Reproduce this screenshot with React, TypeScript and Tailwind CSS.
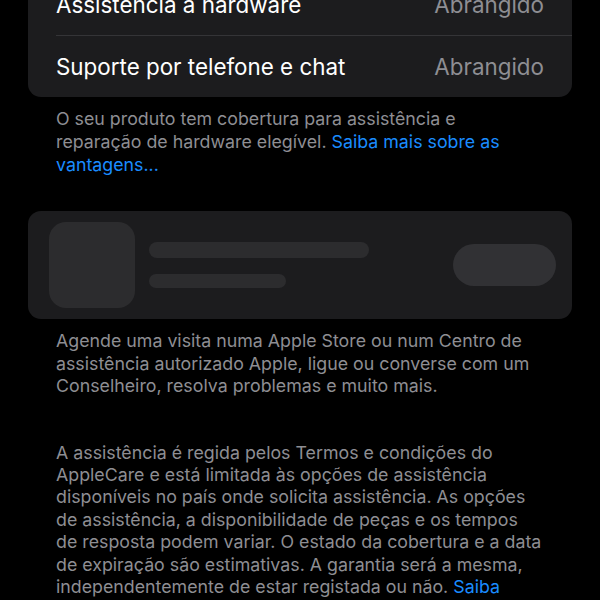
import React from "react";

const rows = [
  { label: "Assistência à hardware", value: "Abrangido" },
  { label: "Suporte por telefone e chat", value: "Abrangido" },
];

export default function App() {
  return (
    <div className="min-h-[600px] h-[600px] overflow-hidden bg-black px-7 font-['Inter',sans-serif] antialiased">
      {/* Coverage list */}
      <div className="-mt-[25px] rounded-[13px] bg-[#1c1c1e]">
        {rows.map((row, i) => (
          <div key={row.label} className="pl-7">
            <div
              className={
                "flex h-[61px] items-center justify-between pr-7 " +
                (i < rows.length - 1 ? "border-b border-[#343437]" : "")
              }
            >
              <span className="text-[22.4px] text-white">{row.label}</span>
              <span className="text-[22.4px] text-[#8e8e93]">{row.value}</span>
            </div>
          </div>
        ))}
      </div>

      <p className="mt-[10px] whitespace-nowrap pl-7 text-[17.8px] leading-[23px] text-[#8e8e93]">
        O seu produto tem cobertura para assistência e<br />
        reparação de hardware elegível.{" "}
        <span className="text-[#1a8cff]">
          Saiba mais sobre as<br />
          vantagens...
        </span>
      </p>

      {/* Loading placeholder */}
      <div className="mt-[35px] flex h-[108px] items-center rounded-[13px] bg-[#1c1c1e] pl-[21px] pr-[16px]">
        <div className="h-[86px] w-[86px] shrink-0 rounded-[17px] bg-[#2c2c2e]" />
        <div className="ml-[14px] flex flex-1 flex-col gap-[16px]">
          <div className="h-[16px] w-[220px] rounded-full bg-[#2c2c2e]" />
          <div className="h-[14px] w-[137px] rounded-full bg-[#2c2c2e]" />
        </div>
        <div className="h-[42px] w-[103px] shrink-0 rounded-full bg-[#313134]" />
      </div>

      <p className="mt-[11px] whitespace-nowrap pl-7 text-[17.8px] leading-[22.5px] text-[#8e8e93]">
        Agende uma visita numa Apple Store ou num Centro de<br />
        assistência autorizado Apple, ligue ou converse com um<br />
        Conselheiro, resolva problemas e muito mais.
      </p>

      <p className="mt-[44px] whitespace-nowrap pl-7 text-[17.8px] leading-[22.4px] text-[#8e8e93]">
        A assistência é regida pelos Termos e condições do<br />
        AppleCare e está limitada às opções de assistência<br />
        disponíveis no país onde solicita assistência. As opções<br />
        de assistência, a disponibilidade de peças e os tempos<br />
        de resposta podem variar. O estado da cobertura e a data<br />
        de expiração são estimativas. A garantia será a mesma,<br />
        independentemente de estar registada ou não.{" "}
        <span className="text-[#1a8cff]">Saiba</span>
      </p>
    </div>
  );
}
